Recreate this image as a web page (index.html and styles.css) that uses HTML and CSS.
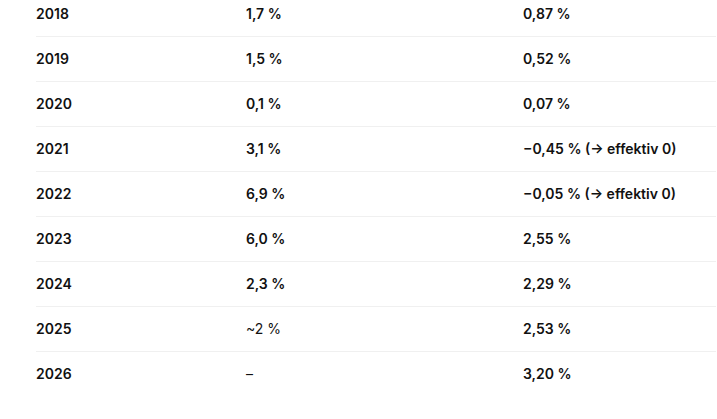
FILE: index.html
```html
<!DOCTYPE html>
<html>
<head>
<meta charset="utf-8">
<link rel="stylesheet" href="styles.css">
</head>
<body>
<div class="wrap">
<table class="rates">
<tbody>
<tr><td class="y">2018</td><td>1,7 %</td><td>0,87 %</td></tr>
<tr><td class="y">2019</td><td>1,5 %</td><td>0,52 %</td></tr>
<tr><td class="y">2020</td><td>0,1 %</td><td>0,07 %</td></tr>
<tr><td class="y">2021</td><td>3,1 %</td><td>−0,45 % (→ effektiv 0)</td></tr>
<tr><td class="y">2022</td><td>6,9 %</td><td>−0,05 % (→ effektiv 0)</td></tr>
<tr><td class="y">2023</td><td>6,0 %</td><td>2,55 %</td></tr>
<tr><td class="y">2024</td><td>2,3 %</td><td>2,29 %</td></tr>
<tr><td class="y">2025</td><td class="n">~2 %</td><td>2,53 %</td></tr>
<tr><td class="y">2026</td><td class="n">–</td><td>3,20 %</td></tr>
</tbody>
</table>
</div>
</body>
</html>
```
FILE: styles.css
```css
html, body {
  margin: 0;
  padding: 0;
  background: #fff;
  overflow: hidden;
}
.wrap {
  padding-left: 36px;
  padding-right: 1px;
  margin-top: -8px;
}
.rates {
  width: 100%;
  border-collapse: collapse;
  font-family: Inter, "Noto Sans", sans-serif;
  font-size: 14px;
  font-weight: 600;
  color: #111;
}
.rates td {
  height: 42px;
  padding: 0 0 2px 0;
  vertical-align: middle;
  border-bottom: 1px solid #f0f0f0;
  text-align: left;
}
.rates td:nth-child(1) { width: 210px; }
.rates td:nth-child(2) { width: 277px; }
.rates td.n { font-weight: 400; }
.rates tr:last-child td { border-bottom: none; }
```
